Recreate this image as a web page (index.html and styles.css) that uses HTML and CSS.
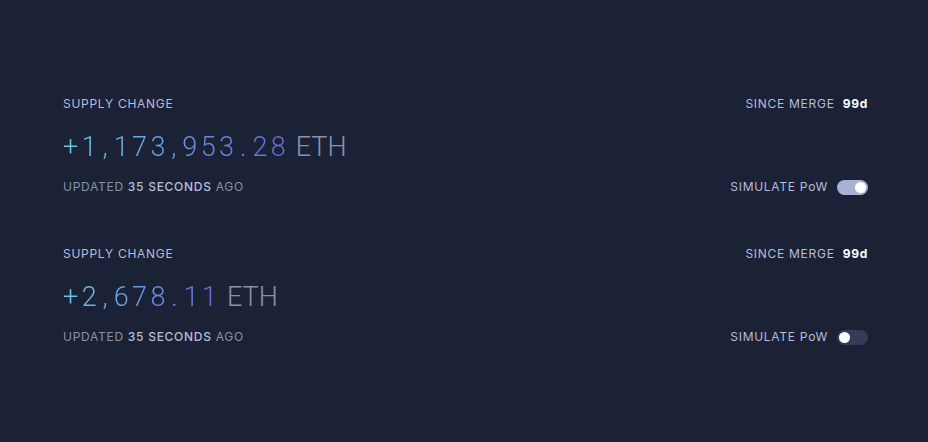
FILE: index.html
```html
<!DOCTYPE html>
<html lang="en">
<head>
  <meta charset="UTF-8" />
  <meta name="viewport" content="width=device-width, initial-scale=1.0"/>
  <title>Supply change</title>
  <link rel="stylesheet" href="styles.css">
</head>
<body>
  <div class="container">
    <section class="widget">
      <div class="row">
        <span class="label">SUPPLY CHANGE</span>
        <span class="label">SINCE MERGE <span class="days">99d</span></span>
      </div>
      <div class="amount">
        <span class="digits">+1<span class="sep">,</span>173<span class="sep">,</span>953<span class="sep">.</span>28</span> <span class="unit">ETH</span>
      </div>
      <div class="row">
        <span class="label muted">UPDATED <span class="strong">35 SECONDS</span> AGO</span>
        <span class="toggle-wrap">
          <span class="label">SIMULATE PoW</span>
          <span class="toggle on"><span class="knob"></span></span>
        </span>
      </div>
    </section>

    <section class="widget">
      <div class="row">
        <span class="label">SUPPLY CHANGE</span>
        <span class="label">SINCE MERGE <span class="days">99d</span></span>
      </div>
      <div class="amount">
        <span class="digits">+2<span class="sep">,</span>678<span class="sep">.</span>11</span> <span class="unit">ETH</span>
      </div>
      <div class="row">
        <span class="label muted">UPDATED <span class="strong">35 SECONDS</span> AGO</span>
        <span class="toggle-wrap">
          <span class="label">SIMULATE PoW</span>
          <span class="toggle"><span class="knob"></span></span>
        </span>
      </div>
    </section>
  </div>
</body>
</html>
```

FILE: styles.css
```css
body {
  margin: 0;
  background-color: #1b2236;
  font-family: Inter, 'Liberation Sans', sans-serif;
}
.container {
  padding: 95px 60px 0 63px;
}
.widget {
  margin-bottom: 49px;
}
.row {
  display: flex;
  justify-content: space-between;
  align-items: center;
}
.label {
  font-size: 12px;
  line-height: 18px;
  letter-spacing: 0.06em;
  color: #b5bddb;
}
.muted {
  color: #8991ad;
}
.strong {
  color: #b5bddb;
  font-weight: 500;
}
.days {
  margin-left: 4px;
  color: #ffffff;
  font-weight: 700;
}
.amount {
  margin: 14px 0 11px;
  font-family: Roboto, 'Liberation Sans', sans-serif;
  font-weight: 300;
  font-size: 27px;
  line-height: 40px;
}
.digits {
  letter-spacing: 3.4px;
  background: linear-gradient(to right, #6ac9e4, #6a66de);
  -webkit-background-clip: text;
  background-clip: text;
  color: transparent;
}
.sep {
  margin: 0 2.5px;
}
.unit {
  color: #8991ad;
}
.toggle-wrap {
  display: flex;
  align-items: center;
  gap: 9px;
}
.toggle {
  width: 31px;
  height: 15px;
  border-radius: 8px;
  background-color: #343c5a;
  display: flex;
  align-items: center;
  padding: 0 2px;
  box-sizing: border-box;
}
.toggle.on {
  background-color: #a9b1d6;
  justify-content: flex-end;
}
.knob {
  width: 11px;
  height: 11px;
  border-radius: 50%;
  background-color: #ffffff;
}
```
